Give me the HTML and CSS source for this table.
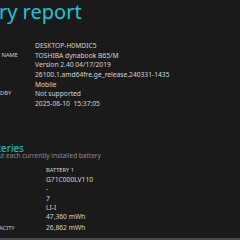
FILE: index.html
```html
<!DOCTYPE html>
<html>
<head>
<meta charset="utf-8">
<link rel="stylesheet" href="styles.css">
</head>
<body>
<div class="page">
  <h1 class="title">Battery report</h1>
  <table class="info">
    <tr><td class="lbl">COMPUTER NAME</td><td class="val">DESKTOP-H0MDIC5</td></tr>
    <tr><td class="lbl">SYSTEM PRODUCT NAME</td><td class="val">TOSHIBA dynabook B65/M</td></tr>
    <tr><td class="lbl">BIOS</td><td class="val">Version 2.40 04/17/2019</td></tr>
    <tr><td class="lbl">OS BUILD</td><td class="val">26100.1.amd64fre.ge_release.240331-1435</td></tr>
    <tr><td class="lbl">PLATFORM ROLE</td><td class="val">Mobile</td></tr>
    <tr><td class="lbl">CONNECTED STANDBY</td><td class="val">Not supported</td></tr>
    <tr><td class="lbl">REPORT TIME</td><td class="val">2025-06-10 &nbsp;15:37:05</td></tr>
  </table>
  <h2 class="section">Installed batteries</h2>
  <p class="sub">Information about each currently installed battery</p>
  <table class="batt">
    <tr><td class="lbl"></td><td class="val head">BATTERY 1</td></tr>
    <tr><td class="lbl">NAME</td><td class="val">G71C000LV110</td></tr>
    <tr><td class="lbl">MANUFACTURER</td><td class="val">-</td></tr>
    <tr><td class="lbl">SERIAL NUMBER</td><td class="val">7</td></tr>
    <tr><td class="lbl">CHEMISTRY</td><td class="val">LI-I</td></tr>
    <tr><td class="lbl">DESIGN CAPACITY</td><td class="val">47,360 mWh</td></tr>
    <tr class="gap"><td class="lbl">FULL CHARGE CAPACITY</td><td class="val">26,862 mWh</td></tr>
  </table>
  <div class="rule"></div>
</div>
</body>
</html>
```
FILE: styles.css
```css
html, body {
  margin: 0;
  padding: 0;
  background: #1a1a1a;
  overflow: hidden;
  width: 240px;
  height: 240px;
}
.page {
  font-family: "Noto Sans", "Open Sans", sans-serif;
  color: #d4d4d4;
  width: 240px;
}
.title {
  margin: 0 0 0 -51px;
  font-weight: 400;
  font-size: 20px;
  line-height: 23px;
  color: #1cc6da;
  white-space: nowrap;
}
.info, .batt {
  border-collapse: collapse;
  font-size: 6.7px;
}
.info {
  margin-top: 18px;
  margin-left: -49px;
}
.batt {
  margin-top: 7px;
  margin-left: -49.6px;
}
td {
  padding: 0;
  white-space: nowrap;
  vertical-align: middle;
}
.info td {
  height: 9.67px;
  line-height: 9.67px;
}
.batt td {
  height: 9.3px;
  line-height: 9.3px;
}
.info .lbl {
  width: 84px;
}
.batt .lbl {
  width: 95.6px;
}
.lbl {
  font-size: 5.7px;
  color: #cfcfcf;
}
.section {
  margin: 35px 0 0 -61px;
  font-size: 10px;
  line-height: 8px;
  font-weight: 400;
  color: #1cc6da;
  white-space: nowrap;
}
.sub {
  margin: 0 0 0 -52px;
  font-size: 6.5px;
  line-height: 7px;
  color: #8c8c8c;
  white-space: nowrap;
}
.head {
  font-size: 5.7px;
}
.batt .gap td {
  height: 14px;
  line-height: 14px;
  vertical-align: bottom;
}
.rule {
  margin-top: 3px;
  height: 2px;
  width: 240px;
  background: #4a4a4a;
}
```
